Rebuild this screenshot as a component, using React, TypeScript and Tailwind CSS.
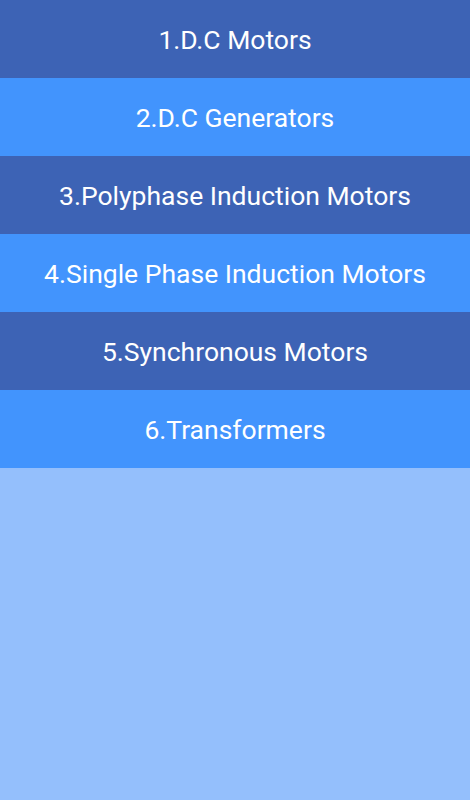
import React from "react";

const items = [
  "1.D.C Motors",
  "2.D.C Generators",
  "3.Polyphase Induction Motors",
  "4.Single Phase Induction Motors",
  "5.Synchronous Motors",
  "6.Transformers",
];

const App = () => {
  return (
    <div className="min-h-screen w-full bg-[#94bffc] font-['Roboto',sans-serif]">
      {items.map((label, i) => (
        <div
          key={label}
          className={
            i % 2 === 0
              ? "h-[78px] flex items-center justify-center bg-[#3d63b5] text-white text-[26.5px] pt-[2px]"
              : "h-[78px] flex items-center justify-center bg-[#4294fd] text-white text-[26.5px] pt-[2px]"
          }
        >
          {label}
        </div>
      ))}
    </div>
  );
};

export default App;
